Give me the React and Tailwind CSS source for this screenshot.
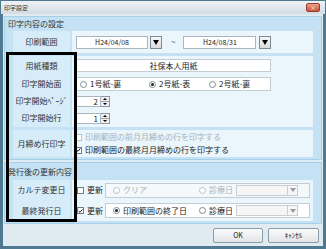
import React from "react";

const F = { fontFamily: '"Noto Sans CJK JP", "Noto Sans", sans-serif' };

function DropBtn() {
  return (
    <div className="w-[12px] h-[13px] border border-[#7a8a96] bg-gradient-to-b from-[#f7f7f7] to-[#dcdcdc] flex items-center justify-center">
      <div className="w-0 h-0 border-l-[3px] border-r-[3px] border-t-[5px] border-l-transparent border-r-transparent border-t-black" />
    </div>
  );
}

function Radio({ on, disabled }) {
  return (
    <div className={`w-[7px] h-[7px] rounded-full border ${disabled ? "border-[#b9c2c8]" : "border-[#7d8a94]"} bg-white flex items-center justify-center shrink-0`}>
      {on && <div className="w-[3px] h-[3px] rounded-full bg-[#222]" />}
    </div>
  );
}

function Check({ on, disabled }) {
  return (
    <div className={`w-[7px] h-[7px] border ${disabled ? "border-[#b9c2c8]" : "border-[#6f7c86]"} bg-white flex items-center justify-center shrink-0`}>
      {on && (
        <svg width="6" height="6" viewBox="0 0 6 6">
          <path d="M0.8 3 L2.4 4.6 L5.2 1.2" stroke="#111" strokeWidth="1.2" fill="none" />
        </svg>
      )}
    </div>
  );
}

function Spin({ v }) {
  return (
    <div className="flex h-[11px]">
      <div className="w-[25px] h-full bg-white border border-[#a9b6bf] text-right pr-[2px] leading-[9px] text-[8px]">{v}</div>
      <div className="w-[9px] h-full border border-[#8c98a2] border-l-0 flex flex-col bg-[#efefef]">
        <div className="flex-1 flex items-center justify-center border-b border-[#a0a0a0]">
          <div className="w-0 h-0 border-l-[2px] border-r-[2px] border-b-[2px] border-l-transparent border-r-transparent border-b-black" />
        </div>
        <div className="flex-1 flex items-center justify-center">
          <div className="w-0 h-0 border-l-[2px] border-r-[2px] border-t-[2px] border-l-transparent border-r-transparent border-t-black" />
        </div>
      </div>
    </div>
  );
}

function Label({ children, h }) {
  return (
    <div className={`w-[57px] ${h} bg-[#d6ecf9] flex items-center justify-center text-[#333] shrink-0`}>
      {children}
    </div>
  );
}

export default function App() {
  return (
    <div style={F} className="w-[326px] h-[249px] bg-[#4f7891] p-[1px] flex flex-col text-[8px] leading-none text-[#222] relative overflow-hidden">
      <div className="h-[13px] bg-gradient-to-b from-[#eef2f5] to-[#d3dce3] flex items-center justify-between pl-[3px] pr-[5px]">
        <span className="text-[6px] text-[#333]">印字設定</span>
        <div className="w-[14px] h-[9px] rounded-[2px] bg-gradient-to-b from-[#e8a08a] to-[#c9533a] border border-[#9a3a28] flex items-center justify-center text-white text-[6px] leading-none">×</div>
      </div>
      <div className="flex-1 mx-[2px] mb-[2px] bg-[#dfeaf1] flex flex-col pt-[2px] px-[1px]">
        {/* group 1 */}
        <div className="bg-[#c4e2f4] border border-[#a7cfe7] flex flex-col px-[8px] pb-[2px]">
          <div className="h-[14px] flex items-center -ml-[5px] text-[#333]">印字内容の設定</div>
          <div className="flex gap-[2px] h-[22px]">
            <Label h="h-full">印刷範囲</Label>
            <div className="flex-1 bg-[#eaf5fc] flex items-center pl-[4px]">
              <div className="w-[72px] h-[13px] bg-white border border-[#a9b6bf] flex items-center justify-center text-[7px]">H24/04/08</div>
              <div className="ml-[2px]"><DropBtn /></div>
              <span className="ml-[9px] mr-[8px] text-[#555]">~</span>
              <div className="w-[73px] h-[13px] bg-white border border-[#a9b6bf] flex items-center justify-center text-[7px]">H24/08/31</div>
              <div className="ml-[3px]"><DropBtn /></div>
            </div>
          </div>
          <div className="flex gap-[2px] mt-[3px]">
            <div className="w-[57px] bg-[#d6ecf9] flex flex-col text-[#333] shrink-0">
              <div className="h-[19px] flex items-center justify-center">用紙種類</div>
              <div className="h-[18px] flex items-center justify-center">印字開始面</div>
              <div className="h-[16px] flex items-center justify-center">印字開始ﾍﾟｰｼﾞ</div>
              <div className="h-[18px] flex items-center justify-center">印字開始行</div>
            </div>
            <div className="flex-1 bg-[#eaf5fc] flex flex-col pl-[4px]">
              <div className="h-[19px] flex items-center">
                <div className="w-[195px] h-[13px] bg-white border border-[#c3cdd3] flex items-center justify-center">社保本人用紙</div>
              </div>
              <div className="h-[18px] flex items-center">
                <div className="w-[195px] h-[14px] bg-white border border-[#c3cdd3] flex items-center pl-[3px]">
                  <div className="w-[69px] flex items-center gap-[3px]"><Radio />1号紙-裏</div>
                  <div className="w-[60px] flex items-center gap-[3px]"><Radio on />2号紙-表</div>
                  <div className="flex items-center gap-[3px]"><Radio />2号紙-裏</div>
                </div>
              </div>
              <div className="h-[16px] flex items-center"><Spin v="2" /></div>
              <div className="h-[18px] flex items-center"><Spin v="1" /></div>
            </div>
          </div>
          <div className="flex gap-[2px] mt-[3px] h-[27px]">
            <Label h="h-full">月締め行印字</Label>
            <div className="flex-1 bg-[#eaf5fc] flex flex-col justify-center gap-[5px] pl-[3px]">
              <div className="flex items-center gap-[3px] text-[#a9b3ba]"><Check disabled />印刷範囲の前月月締めの行を印字する</div>
              <div className="flex items-center gap-[3px]"><Check on />印刷範囲の最終月月締めの行を印字する</div>
            </div>
          </div>
        </div>
        {/* group 2 */}
        <div className="mt-[2px] bg-[#c4e2f4] border border-[#a7cfe7] flex flex-col px-[8px] pb-[2px]">
          <div className="h-[17px] flex items-center -ml-[5px] text-[#333]">発行後の更新内容</div>
          <div className="flex gap-[2px]">
            <div className="w-[57px] bg-[#d6ecf9] flex flex-col text-[#333] shrink-0">
              <div className="h-[20px] flex items-center justify-center">カルテ変更日</div>
              <div className="h-[21px] flex items-center justify-center">最終発行日</div>
            </div>
            <div className="flex-1 bg-[#eaf5fc] flex flex-col pl-[5px]">
              <div className="h-[20px] flex items-center">
                <div className="w-[28px] flex items-center gap-[3px]"><Check />更新</div>
                <div className="flex-1 h-[15px] bg-[#f4f9fc] border border-[#c3cdd3] flex items-center pl-[7px] mr-[3px]">
                  <div className="w-[86px] flex items-center gap-[3px] text-[#a9b3ba]"><Radio disabled />クリア</div>
                  <div className="flex items-center gap-[3px] text-[#a9b3ba]"><Radio disabled />診療日</div>
                  <div className="ml-[3px] w-[62px] h-[11px] bg-[#f6f6f6] border border-[#c9cfd4] flex justify-end">
                    <div className="w-[10px] h-full border-l border-[#c9cfd4] flex items-center justify-center">
                      <div className="w-0 h-0 border-l-[3px] border-r-[3px] border-t-[4px] border-l-transparent border-r-transparent border-t-[#999]" />
                    </div>
                  </div>
                </div>
              </div>
              <div className="h-[21px] flex items-center">
                <div className="w-[28px] flex items-center gap-[3px]"><Check on />更新</div>
                <div className="flex-1 h-[15px] bg-white border border-[#c3cdd3] flex items-center pl-[7px] mr-[3px]">
                  <div className="w-[86px] flex items-center gap-[3px]"><Radio on />印刷範囲の終了日</div>
                  <div className="flex items-center gap-[3px]"><Radio />診療日</div>
                  <div className="ml-[3px] w-[62px] h-[11px] bg-[#f6f6f6] border border-[#c9cfd4] flex justify-end">
                    <div className="w-[10px] h-full border-l border-[#c9cfd4] flex items-center justify-center">
                      <div className="w-0 h-0 border-l-[3px] border-r-[3px] border-t-[4px] border-l-transparent border-r-transparent border-t-[#999]" />
                    </div>
                  </div>
                </div>
              </div>
            </div>
          </div>
        </div>
        {/* footer */}
        <div className="flex-1 flex items-center justify-end gap-[5px] pr-[3px]">
          <div className="w-[50px] h-[15px] border border-[#8a9aa6] rounded-[2px] bg-gradient-to-b from-[#fbfbfb] to-[#e1e4e7] flex items-center justify-center text-[7px]">OK</div>
          <div className="w-[51px] h-[15px] border border-[#8a9aa6] rounded-[2px] bg-gradient-to-b from-[#fbfbfb] to-[#e1e4e7] flex items-center justify-center text-[7px]">ｷｬﾝｾﾙ</div>
        </div>
      </div>
      <div className="absolute left-[6px] top-[52px] w-[71px] h-[170px] border-[3px] border-black" />
    </div>
  );
}
